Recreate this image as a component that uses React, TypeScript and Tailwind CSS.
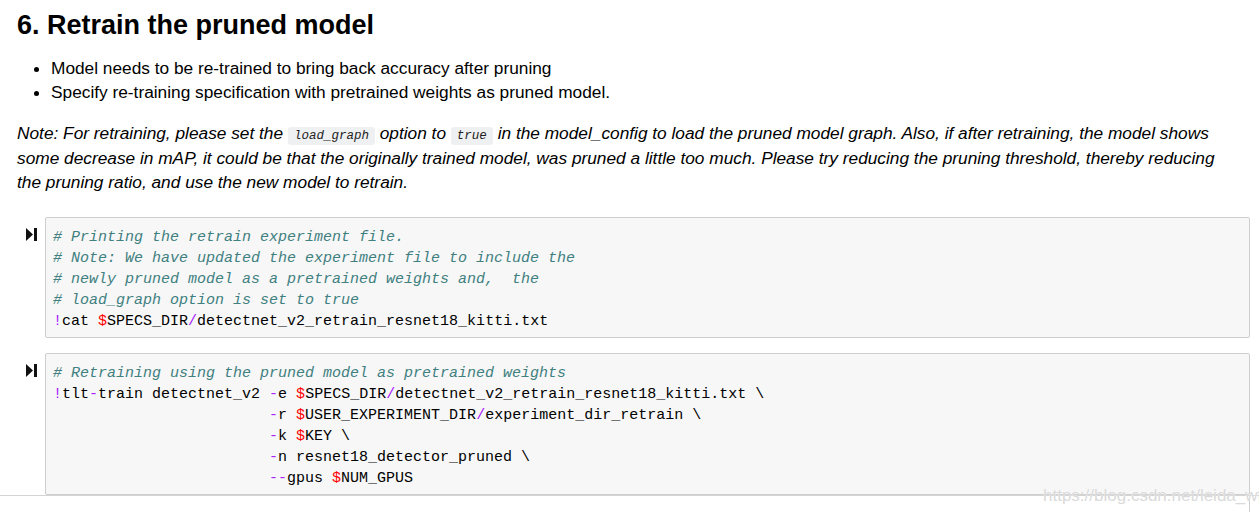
const Sym = ({ c, children }: { c: string; children: React.ReactNode }) => (
  <span className={c}>{children}</span>
);

const P = ({ children }: { children: React.ReactNode }) => <Sym c="text-[#aa22ff]">{children}</Sym>;
const D = () => <Sym c="text-[#ff0000]">$</Sym>;
const Cm = ({ children }: { children: React.ReactNode }) => (
  <span className="italic text-[#408080]">{children}</span>
);

const RunIcon = () => (
  <svg width="12" height="13" viewBox="0 0 12 13" className="block">
    <polygon points="0,0 7,6.5 0,13" fill="#111" />
    <rect x="8" y="0" width="3" height="13" fill="#111" />
  </svg>
);

const Cell = ({ children }: { children: React.ReactNode }) => (
  <div className="flex">
    <div className="w-[45px] shrink-0 pl-[26px] pt-[11px]">
      <RunIcon />
    </div>
    <div className="flex-1 border border-[#cfcfcf] bg-[#f7f7f7] rounded-[2px] px-[7px] pt-[9px] pb-[5px]">
      <pre className="font-['Liberation_Mono',monospace] text-[15px] leading-[21px] text-black whitespace-pre">
        {children}
      </pre>
    </div>
  </div>
);

const InlineCode = ({ children }: { children: React.ReactNode }) => (
  <code className="bg-[#eff0f1] rounded-[3px] px-[6px] py-[2px] leading-none font-['Liberation_Mono',monospace] text-[12.5px] text-[#222]">
    {children}
  </code>
);

export default function App() {
  const pad = "                        ";
  return (
    <div className="relative w-[1259px] h-[512px] overflow-hidden bg-white font-['Liberation_Sans',Arial,sans-serif] text-black">
      <h2 className="pl-[17px] pt-[9px] text-[27px] leading-[32px] font-bold">6. Retrain the pruned model</h2>

      <ul className="mt-[15px] pl-[51px] list-disc text-[17.3px] leading-[24px]">
        <li>Model needs to be re-trained to bring back accuracy after pruning</li>
        <li>Specify re-training specification with pretrained weights as pruned model.</li>
      </ul>

      <p className="mt-[17px] pl-[17px] italic text-[17.3px] leading-[24.5px] whitespace-nowrap">
        Note: For retraining, please set the <InlineCode>load_graph</InlineCode> option to <InlineCode>true</InlineCode> in
        the model_config to load the pruned model graph. Also, if after retraining, the model shows
        <br />
        some decrease in mAP, it could be that the originally trained model, was pruned a little too much. Please try reducing the pruning threshold, thereby reducing
        <br />
        the pruning ratio, and use the new model to retrain.
      </p>

      <div className="mt-[22px] pr-[9px] flex flex-col gap-[15px]">
        <Cell>
          <Cm># Printing the retrain experiment file.</Cm>
          {"\n"}
          <Cm># Note: We have updated the experiment file to include the</Cm>
          {"\n"}
          <Cm># newly pruned model as a pretrained weights and,  the</Cm>
          {"\n"}
          <Cm># load_graph option is set to true</Cm>
          {"\n"}
          <P>!</P>cat <D />SPECS_DIR<P>/</P>detectnet_v2_retrain_resnet18_kitti.txt
        </Cell>
        <div className="border-b border-[#d4d4d4] -mr-[9px] pr-[9px]">
          <Cell>
            <Cm># Retraining using the pruned model as pretrained weights</Cm>
            {"\n"}
            <P>!</P>tlt<P>-</P>train detectnet_v2 <P>-</P>e <D />SPECS_DIR<P>/</P>detectnet_v2_retrain_resnet18_kitti.txt \
            {"\n"}
            {pad}<P>-</P>r <D />USER_EXPERIMENT_DIR<P>/</P>experiment_dir_retrain \
            {"\n"}
            {pad}<P>-</P>k <D />KEY \
            {"\n"}
            {pad}<P>-</P>n resnet18_detector_pruned \
            {"\n"}
            {pad}<P>--</P>gpus <D />NUM_GPUS
          </Cell>
        </div>
        <div className="-mt-[15px] flex justify-end h-[20px]">
          <div className="w-px bg-[#cfcfcf]" />
        </div>
      </div>

      <div className="absolute left-[1043px] top-[483px] whitespace-nowrap text-[17px] text-[#dadada] [text-shadow:0_0_1px_#fff]">
        https://blog.csdn.net/leida_wt
      </div>
    </div>
  );
}
